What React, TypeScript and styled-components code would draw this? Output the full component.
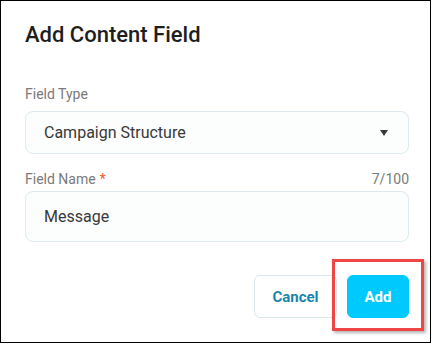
import React from "react";
import styled, { createGlobalStyle } from "styled-components";

const Global = createGlobalStyle`
  html, body { margin: 0; padding: 0; background: #ffffff; }
  body { font-family: Roboto, "Noto Sans", Arial, sans-serif; }
  * { box-sizing: border-box; }
`;

const Frame = styled.div`
  position: relative;
  width: 431px;
  height: 343px;
  border: 1px solid #000;
  background: #fff;
  padding: 21px 21px 0 24px;
  display: flex;
  flex-direction: column;
`;

const Title = styled.h1`
  margin: 0;
  font-size: 22px;
  line-height: 26px;
  font-weight: 500;
  color: #1e1e1e;
`;

const LabelRow = styled.div<{ $top: number; $bottom: number }>`
  display: flex;
  justify-content: space-between;
  align-items: center;
  margin-top: ${(p) => p.$top}px;
  margin-bottom: ${(p) => p.$bottom}px;
  height: 20px;
  font-size: 14px;
  line-height: 20px;
  color: #7a7a7a;
`;

const Required = styled.span`
  color: #f05a2a;
  margin-left: 4px;
`;

const Box = styled.div<{ $h: number }>`
  height: ${(p) => p.$h}px;
  border: 1px solid #dcebf0;
  border-radius: 8px;
  background: #fcfdfd;
  display: flex;
  align-items: center;
  justify-content: space-between;
  padding: 0 20px 0 18px;
  font-size: 16px;
  color: #383838;
`;

const Caret = styled.span`
  width: 0;
  height: 0;
  border-left: 4.5px solid transparent;
  border-right: 4.5px solid transparent;
  border-top: 6px solid #3a3a3a;
`;

const Actions = styled.div`
  margin-top: 33px;
  display: flex;
  justify-content: flex-end;
  gap: 10px;
`;

const Button = styled.button<{ $primary?: boolean }>`
  height: 43px;
  padding: 0;
  width: ${(p) => (p.$primary ? 62 : 83)}px;
  border-radius: 6px;
  font-family: Roboto, Arial, sans-serif;
  font-size: 15px;
  font-weight: 700;
  cursor: pointer;
  border: 1px solid ${(p) => (p.$primary ? "#00c9fe" : "#d8e8ee")};
  background: ${(p) => (p.$primary ? "#00c9fe" : "#ffffff")};
  color: ${(p) => (p.$primary ? "#ffffff" : "#1a86ac")};
`;

const Highlight = styled.div`
  position: absolute;
  left: 331px;
  top: 258px;
  width: 92px;
  height: 72px;
  border: 3.5px solid #f04545;
  box-shadow: 2px 2px 3px rgba(0, 0, 0, 0.3);
  pointer-events: none;
`;

export default function App() {
  return (
    <>
      <Global />
      <Frame>
        <Title>Add Content Field</Title>
        <LabelRow $top={36} $bottom={7}>
          <span>Field Type</span>
        </LabelRow>
        <Box $h={43}>
          <span>Campaign Structure</span>
          <Caret />
        </Box>
        <LabelRow $top={15} $bottom={2}>
          <span>
            Field Name<Required>*</Required>
          </span>
          <span>7/100</span>
        </LabelRow>
        <Box $h={51}>
          <span>Message</span>
        </Box>
        <Actions>
          <Button>Cancel</Button>
          <Button $primary>Add</Button>
        </Actions>
        <Highlight />
      </Frame>
    </>
  );
}
